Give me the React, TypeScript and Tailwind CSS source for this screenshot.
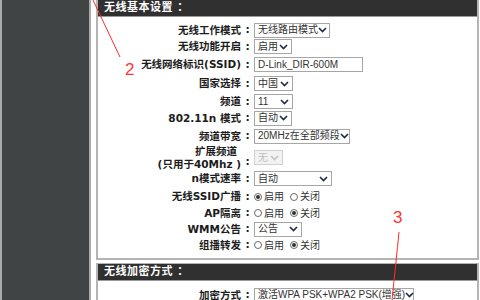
import React from "react";

const LABEL_FONT = "font-['DejaVu_Sans','Noto_Sans_CJK_SC',sans-serif]";
const CTRL_FONT = "font-['Liberation_Sans','Noto_Sans_CJK_SC',sans-serif]";

function Chevron({ light = false }: { light?: boolean }) {
  return (
    <svg width="9" height="6" viewBox="0 0 9 6" className="shrink-0">
      <polyline
        points="1,1 4.5,4.5 8,1"
        fill="none"
        stroke={light ? "#c4c4c4" : "#1d2a48"}
        strokeWidth="1.6"
      />
    </svg>
  );
}

function Select({ value, width, disabled = false }: { value: string; width: string; disabled?: boolean }) {
  return (
    <div
      className={`flex h-[15px] items-center justify-between border pl-[3px] pr-[3px] text-[10px] leading-none ${CTRL_FONT} ${width} ${
        disabled ? "border-[#d0d0d0] bg-[#f2f2f2] text-[#c0c0c0]" : "border-[#a6a6a6] bg-white text-[#333]"
      }`}
    >
      <span className="whitespace-nowrap">{value}</span>
      <Chevron light={disabled} />
    </div>
  );
}

function Radio({ checked, label }: { checked: boolean; label: string }) {
  return (
    <span className={`flex items-center gap-[2px] text-[10px] text-[#333] ${CTRL_FONT}`}>
      <span className="flex h-[8px] w-[8px] items-center justify-center rounded-full border border-[#6a6a6a] bg-white">
        {checked && <span className="h-[4px] w-[4px] rounded-full bg-[#333]" />}
      </span>
      {label}
    </span>
  );
}

function Row({ label, h, children }: { label: React.ReactNode; h: string; children: React.ReactNode }) {
  return (
    <div className={`flex items-center ${h}`}>
      <div className={`w-[143px] text-right text-[10.5px] font-bold leading-[13px] text-[#1c1c1c] ${LABEL_FONT}`}>{label}</div>
      <div className={`w-[13px] text-center text-[10.5px] font-bold text-[#1c1c1c] ${LABEL_FONT}`}>:</div>
      <div className="flex items-center gap-[6px]">{children}</div>
    </div>
  );
}

function Header({ title }: { title: string }) {
  return (
    <div className={`flex h-[17px] items-center border-b border-[#9a9a9a] bg-[#303030] pl-[6px] text-[11px] font-bold tracking-[0.5px] text-white ${LABEL_FONT}`}>
      {title}
    </div>
  );
}

export default function App() {
  return (
    <div className="relative flex h-[300px] w-[480px] overflow-hidden bg-white">
      <aside className="h-full w-[91px] shrink-0 border-l-2 border-r-2 border-[#a9abab] bg-[#404444]" />

      <main className="ml-[5px] flex w-[383px] flex-col">
        <section className="border-x-2 border-b-2 border-[#b4b4b4]">
          <Header title="无线基本设置 ：" />
          <div className="flex flex-col pt-[5px] pb-[5px]">
            <Row label="无线工作模式" h="h-[16px]">
              <Select value="无线路由模式" width="w-[76px]" />
            </Row>
            <Row label="无线功能开启" h="h-[17px]">
              <Select value="启用" width="w-[38px]" />
            </Row>
            <Row label="无线网络标识(SSID)" h="h-[19px]">
              <div className={`flex h-[15px] w-[109px] items-center border border-[#a6a6a6] bg-white pl-[3px] text-[10px] text-[#333] ${CTRL_FONT}`}>
                D-Link_DIR-600M
              </div>
            </Row>
            <Row label="国家选择" h="h-[19px]">
              <Select value="中国" width="w-[39px]" />
            </Row>
            <Row label="频道" h="h-[17px]">
              <Select value="11" width="w-[39px]" />
            </Row>
            <Row label="802.11n 模式" h="h-[16px]">
              <Select value="自动" width="w-[38px]" />
            </Row>
            <Row label="频道带宽" h="h-[20px]">
              <Select value="20MHz在全部频段" width="w-[96px]" />
            </Row>
            <div className="flex h-[23px] items-center">
              <div className={`w-[143px] text-right text-[10.5px] font-bold leading-[13px] text-[#1c1c1c] ${LABEL_FONT}`}>
                <div className="pr-[4px]">扩展频道</div>
                <div>(只用于40Mhz )</div>
              </div>
              <div className={`w-[13px] self-end pb-[1px] text-center text-[10.5px] font-bold leading-[13px] text-[#1c1c1c] ${LABEL_FONT}`}>:</div>
              <Select value="无" width="w-[29px]" disabled />
            </div>
            <Row label="n模式速率" h="h-[19px]">
              <Select value="自动" width="w-[78px]" />
            </Row>
            <Row label="无线SSID广播" h="h-[17px]">
              <Radio checked label="启用" />
              <Radio checked={false} label="关闭" />
            </Row>
            <Row label="AP隔离" h="h-[16px]">
              <Radio checked={false} label="启用" />
              <Radio checked label="关闭" />
            </Row>
            <Row label="WMM公告" h="h-[16px]">
              <Select value="公告" width="w-[48px]" />
            </Row>
            <Row label="组播转发" h="h-[16px]">
              <Radio checked={false} label="启用" />
              <Radio checked label="关闭" />
            </Row>
          </div>
        </section>

        <section className="mt-[3px] flex-1 border-x-2 border-t border-[#b4b4b4]">
          <Header title="无线加密方式 ：" />
          <div className="flex flex-col pt-[6px]">
            <Row label="加密方式" h="h-[16px]">
              <Select value="激活WPA PSK+WPA2 PSK(增强)" width="w-[160px]" />
            </Row>
          </div>
        </section>
      </main>

      {/* red annotations */}
      <svg className="pointer-events-none absolute inset-0" width="480" height="300">
        <line x1="93" y1="0" x2="120" y2="57" stroke="#ff2b2b" strokeWidth="1" />
        <path d="M399 232 Q396 262 392 300" fill="none" stroke="#ff2b2b" strokeWidth="1" />
      </svg>
      <span className="absolute left-[125px] top-[61px] text-[17px] leading-none text-[#ff3535] font-['Liberation_Sans',sans-serif]">2</span>
      <span className="absolute left-[393px] top-[209px] text-[17px] leading-none text-[#ff3535] font-['Liberation_Sans',sans-serif]">3</span>
    </div>
  );
}
